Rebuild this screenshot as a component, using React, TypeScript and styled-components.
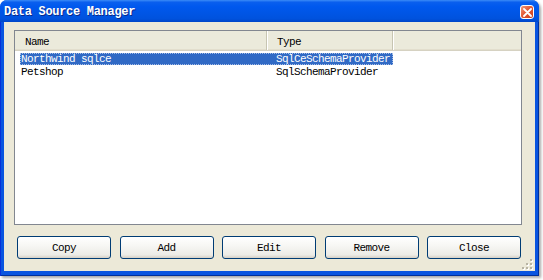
import React from 'react';
import styled, { createGlobalStyle } from 'styled-components';

const GlobalStyle = createGlobalStyle`
  html, body {
    margin: 0;
    padding: 0;
    background: #ffffff;
  }
`;

const sources = [
  { name: 'Northwind sqlce', type: 'SqlCeSchemaProvider', selected: true },
  { name: 'Petshop', type: 'SqlSchemaProvider', selected: false },
];

const buttons = ['Copy', 'Add', 'Edit', 'Remove', 'Close'];

const DataSourceManager = () => {
  return (
    <Page>
      <GlobalStyle />
      <Window>
        <TitleBar>
          <Title>Data Source Manager</Title>
          <CloseBox>
            <svg width="9" height="9" viewBox="0 0 9 9">
              <path d="M1 1 L8 8 M8 1 L1 8" stroke="#fff" strokeWidth="1.8" strokeLinecap="round" />
            </svg>
          </CloseBox>
        </TitleBar>
        <Frame>
          <Body>
            <ListView>
              <Header>
                <HeaderCell $width={252}>Name</HeaderCell>
                <HeaderCell $width={126}>Type</HeaderCell>
                <HeaderFill />
              </Header>
              <Rows>
                {sources.map((s) => (
                  <Row key={s.name} $selected={s.selected}>
                    <NameCell>{s.name}</NameCell>
                    <TypeCell>{s.type}</TypeCell>
                  </Row>
                ))}
              </Rows>
            </ListView>
            <ButtonRow>
              {buttons.map((b) => (
                <Button key={b}>{b}</Button>
              ))}
            </ButtonRow>
            <Grip width="11" height="11" viewBox="0 0 11 11">
              {[
                [8, 0],
                [4, 4],
                [8, 4],
                [0, 8],
                [4, 8],
                [8, 8],
              ].map(([x, y]) => (
                <g key={`${x}-${y}`}>
                  <rect x={x + 1} y={y + 1} width="2" height="2" fill="#ffffff" />
                  <rect x={x} y={y} width="2" height="2" fill="#b8b4a3" />
                </g>
              ))}
            </Grip>
          </Body>
        </Frame>
      </Window>
    </Page>
  );
};

// SimSun-like look: taller glyphs squeezed to a 6px advance
const monoText = `
  font-family: 'Liberation Mono', 'DejaVu Sans Mono', monospace;
  font-size: 11px;
  letter-spacing: -0.6px;
  color: #000000;
`;

const Page = styled.div`
  width: 543px;
  height: 280px;
  box-sizing: border-box;
  padding: 0 4px 4px 0;
  background: #ffffff;
`;

const Window = styled.div`
  width: 539px;
  height: 276px;
  display: flex;
  flex-direction: column;
  border-radius: 7px 7px 0 0;
  overflow: hidden;
  background: #0055e5;
  box-shadow: 2px 2px 3px rgba(0, 0, 0, 0.35);
`;

const TitleBar = styled.div`
  height: 22px;
  flex: none;
  display: flex;
  align-items: center;
  justify-content: space-between;
  padding: 0 5px 0 4px;
  background: linear-gradient(
    #3c8cf7 0%,
    #0a5fee 10%,
    #0058ee 30%,
    #0055e5 60%,
    #0052dd 85%,
    #0046c8 100%
  );
`;

const Title = styled.span`
  font-family: 'Liberation Mono', 'DejaVu Sans Mono', monospace;
  font-weight: bold;
  font-size: 12px;
  letter-spacing: -0.3px;
  color: #ffffff;
  text-shadow: 1px 1px 0 #0a2a8a;
  margin-top: 2px;
`;

const CloseBox = styled.div`
  width: 14px;
  height: 14px;
  box-sizing: border-box;
  border: 1px solid #ffffff;
  border-radius: 3px;
  background: linear-gradient(135deg, #f29a7e 0%, #e35a35 45%, #c8401f 100%);
  display: flex;
  align-items: center;
  justify-content: center;
  margin-top: 2px;
`;

const Frame = styled.div`
  flex: 1;
  display: flex;
  padding: 0 4px 5px 4px;
  background: #0a55e0;
  box-shadow: inset 1px 0 #0831d9, inset -1px 0 #00309c, inset 0 -1px #00309c;
`;

const Body = styled.div`
  position: relative;
  flex: 1;
  display: flex;
  flex-direction: column;
  padding: 8px 13px 0 10px;
  background: #ece9d8;
`;

const ListView = styled.div`
  ${monoText}
  height: 195px;
  box-sizing: border-box;
  background: #ffffff;
  border: 1px solid #828790;
  display: flex;
  flex-direction: column;
`;

const Header = styled.div`
  height: 19px;
  flex: none;
  display: flex;
  background: #ebeadb;
  border-bottom: 1px solid #d6d2c2;
  box-shadow: inset 0 -1px #e2decd;
`;

const HeaderCell = styled.div<{ $width: number }>`
  width: ${(p) => p.$width}px;
  box-sizing: border-box;
  display: flex;
  align-items: center;
  padding: 3px 0 0 10px;
  border-right: 1px solid #c7c5b2;
  box-shadow: 1px 0 #ffffff;
`;

const HeaderFill = styled.div`
  flex: 1;
`;

const Rows = styled.div`
  display: flex;
  flex-direction: column;
  padding: 2px 0 0 5px;
`;

const Row = styled.div<{ $selected: boolean }>`
  width: 373px;
  height: 12px;
  display: flex;
  align-items: center;
  background: ${(p) => (p.$selected ? '#316ac5' : 'transparent')};
  color: ${(p) => (p.$selected ? '#ffffff' : '#000000')};
  outline: ${(p) => (p.$selected ? '1px dotted #a6bde6' : 'none')};
  outline-offset: -1px;
  margin-bottom: 1px;
`;

const NameCell = styled.div`
  width: 247px;
  padding-left: 1px;
  white-space: nowrap;
`;

const TypeCell = styled.div`
  padding-left: 8px;
  white-space: nowrap;
`;

const ButtonRow = styled.div`
  display: flex;
  justify-content: space-between;
  margin: 11px 1px 0 3px;
`;

const Button = styled.div`
  ${monoText}
  width: 94px;
  height: 23px;
  box-sizing: border-box;
  display: flex;
  align-items: center;
  justify-content: center;
  padding-top: 1px;
  border: 1px solid #003c74;
  border-radius: 3px;
  background: linear-gradient(#ffffff 0%, #f7f7f4 40%, #ecebe6 85%, #d6d0c5 100%);
`;

const Grip = styled.svg`
  position: absolute;
  right: 2px;
  bottom: 1px;
`;

export default DataSourceManager;
